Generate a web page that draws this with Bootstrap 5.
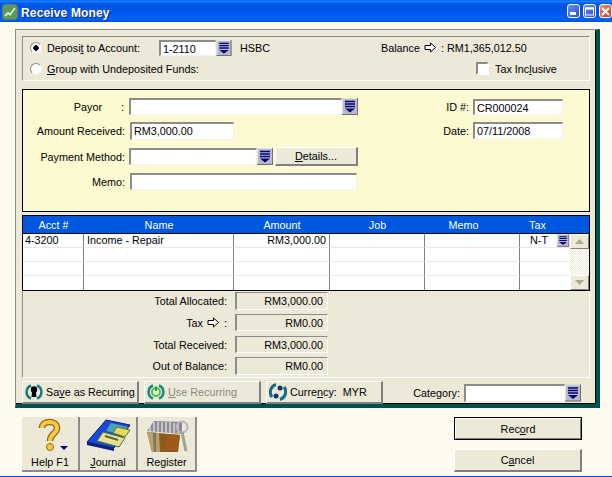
<!DOCTYPE html>
<html lang="en"><head><meta charset="utf-8"><title>Receive Money</title>
<link href="https://cdn.jsdelivr.net/npm/bootstrap@5.3.0/dist/css/bootstrap.min.css" rel="stylesheet">
<style>
html,body{width:612px;height:477px;overflow:hidden}
body{margin:0;background:#fffaf0;color:#000;font:10.8px/14px "Liberation Sans",Arial,sans-serif;border-bottom:1px solid #0054e3;box-sizing:border-box}
u{text-underline-offset:1px}
.xp-title{height:22px;padding-left:2px;background:linear-gradient(#0058ee,#2a86ff 5%,#036ffc 10%,#0057e5 20%,#0054e3 30%,#0055eb 56%,#005bf5 70%,#0262ee 85%,#0054dc 100%);color:#fff;font-weight:700;font-size:12px;letter-spacing:.15px;text-shadow:1px 1px 0 #0a2a80}
.xp-titletext{padding-top:3px}
.xp-appicon{width:16px;height:16px;margin-right:3px;margin-top:2px}
.xp-wbtn{width:13px;height:14px;border:1px solid #fff;border-radius:3px;display:block;margin-left:3px;background:linear-gradient(135deg,#6d8ff0,#2c4fc8)}
.xp-wbtn.close{background:linear-gradient(135deg,#ee9070,#c8391a);margin-left:3px}
.xp-panel{margin:7px 12px 0 15px;width:585px;height:379px;box-sizing:border-box;background:#ece9d8;border-left:1px solid #8c8c8c;border-top:1px solid #8c8c8c;border-right:4px solid #00504c;border-bottom:4px solid #00504c;padding:6px 0 0 6px;box-shadow:inset -1px -1px 0 #000}
.etch{width:568px;border:1px solid;border-color:#8c8c8c #fff #fff #8c8c8c}
.g1{height:45px;padding:0 0 0 7px}
.g1row{height:21px}
.radio{width:12px;height:12px;border-radius:50%;background:#fff;border:1px solid;border-color:#8c8c8c #f4f2e8 #f4f2e8 #8c8c8c;margin-right:5px;flex:none}
.radio.on{background:radial-gradient(circle,#000 0,#000 2.5px,#fff 3px)}
.check{width:13px;height:13px;background:#fff;border:2px solid;border-color:#8c8c8c #fff #fff #8c8c8c;margin-right:6px;flex:none}
.field{background:#fff;border:2px solid;border-color:#8c8c8c #f2f2f2 #f2f2f2 #8c8c8c;border-right-width:1px;border-bottom-width:1px;box-sizing:border-box;padding-left:2px;line-height:14px;white-space:nowrap}
.ddown{width:16px;flex:none;align-self:stretch;display:block}
.form-yel{width:568px;height:123px;margin-top:8px;border:1px solid #000;background:#fcfad0;padding-top:8px}
.lab{width:102px;text-align:right;margin-right:4px;flex:none}
.frow1{height:17px;margin-bottom:7px}
.frow2{height:18px;margin-bottom:7px}
.frow3{height:19px;margin-bottom:7px}
.frow4{height:17px}
.rawbtn{background:#ece9d8;border:1px solid;border-color:#fff #808080 #808080 #fff;border-right-width:2px;border-bottom-width:2px;box-sizing:border-box;text-align:center;color:#000;padding:0;border-radius:0}
.rcol{margin-left:81px}
.gridbox{width:568px;height:76px;margin-top:3px;border:1px solid #000;background:#fff}
.ghead{height:18px;background:#0058e0;color:#fff;border-bottom:1px solid #000;line-height:18px;text-align:center;display:grid;grid-template-columns:61px 150px 96px 95px 95px 69px}
.gt{table-layout:fixed;width:547px;border-collapse:separate;border-spacing:0;height:56px}
.gt td{height:14px;padding:0 2px;line-height:13px;border-right:1px solid #808080;border-bottom:1px solid #e8e8e8;white-space:nowrap;overflow:hidden;vertical-align:top}
.gt tr:last-child td{border-bottom:0}
.gt td:last-child{border-right:0;padding:0}
.sbar{width:19px;height:56px;background:repeating-conic-gradient(#ece9d8 0 25%,#fff 0 50%) 0 0/2px 2px;display:flex;flex-direction:column;justify-content:space-between}
.sbtn{height:15px;background:#ece9d8;border:1px solid;border-color:#fff #808080 #808080 #fff;display:flex;align-items:center;justify-content:center}
.g3{height:87px;border-top:0;padding-top:1px}
.trow{height:18px;margin-bottom:4px}
.trow:nth-child(2){height:17px;margin-bottom:5px}
.trow:nth-child(3){height:17px}
.tlab{width:204px;text-align:right;margin-right:8px}
.tval{width:93px;height:100%;border:1px solid;border-color:#8c8c8c #fff #fff #8c8c8c;border-left-width:2px;text-align:right;padding-right:4px;line-height:16px;box-sizing:border-box}
.brow{margin-top:3px;height:23px;width:568px}
.bbtn{width:117px;height:23px;margin-right:5px;display:flex;align-items:center;padding-left:2px;white-space:nowrap}
.bbtn svg{margin-right:3px;flex:none}
.muted-x{color:#8a8a80}
.foot{margin:9px 30px 0 22px;height:55px}
.tool{width:58px;height:55px;background:#ece9d8;border-right:2px solid #8c8c8c;border-bottom:2px solid #8c8c8c;text-align:center;box-sizing:border-box;padding-top:1px;font-size:10.8px}
.tool:last-child{width:59px}
.tool svg{display:block;margin:0 auto}
.cmd{width:128px;height:23px;line-height:20px}
.cmd.def{outline:1px solid #000;outline-offset:-1px;border-width:2px;border-color:#fff #808080 #808080 #fff;line-height:18px}
</style></head>
<body>
<svg width="0" height="0" class="d-block" style="position:absolute"><defs>
<symbol id="dd" viewBox="0 0 16 17"><rect width="16" height="17" fill="#b9b9c6"/><path d="M0 0H16V1H1V16H0Z" fill="#e6e6ea"/><path d="M16 0V17H0V16H15V0Z" fill="#6f6f78"/><path d="M3 3.500H13M3 6H13M3 8.500H13" stroke="#000080" stroke-width="1.400"/><path d="M3 10.500H13L8 14.500Z" fill="#000080"/></symbol>
<symbol id="arr" viewBox="0 0 13 11"><path d="M1 3.500H6.500V1L11.500 5.500L6.500 10V7.500H1Z" fill="#fff" stroke="#000" stroke-width="1"/></symbol>
</defs></svg>
<div class="xp-title d-flex align-items-center">
<svg class="xp-appicon" viewBox="0 0 16 16"><rect x=".5" y=".5" width="15" height="15" rx="3" fill="#5a9a58" stroke="#7a6a8a"/><path d="M3 12L6 9L8 10.500L13 4" stroke="#d4f0c0" stroke-width="2" fill="none"/></svg>
<span class="xp-titletext">Receive Money</span>
<span class="ms-auto d-flex">
<span class="xp-wbtn d-flex align-items-end justify-content-center"><svg width="7" height="5"><rect y="0" width="6" height="3" fill="#fff"/></svg></span>
<span class="xp-wbtn d-flex align-items-center justify-content-center"><svg width="9" height="9"><rect x=".5" y="1" width="8" height="7" fill="none" stroke="#fff"/><rect x=".5" y=".5" width="8" height="2" fill="#fff"/></svg></span>
<span class="xp-wbtn close d-flex align-items-center justify-content-center"><svg width="9" height="9"><path d="M1 1L8 8M8 1L1 8" stroke="#fff" stroke-width="2"/></svg></span>
</span>
</div>

<div class="xp-panel">
 <div class="etch g1">
  <div class="g1row d-flex align-items-center">
   <span class="radio on"></span><span style="width:112px" class="flex-none">Deposi<u>t</u> to Account:</span>
   <span class="d-flex" style="height:16px;width:73px"><span class="field flex-grow-1">1-2110</span><svg class="ddown"><use href="#dd"/></svg></span>
   <span class="ms-1 ps-1" style="width:145px">HSBC</span>
   <span>Balance</span><svg width="13" height="11" class="mx-1"><use href="#arr"/></svg><span>: RM1,365,012.50</span>
  </div>
  <div class="g1row d-flex align-items-center">
   <span class="radio"></span><span style="width:429px"><u>G</u>roup with Undeposited Funds:</span>
   <span class="check"></span><span>Tax Inc<u>l</u>usive</span>
  </div>
 </div>

 <div class="form-yel d-flex">
  <div>
   <div class="frow1 d-flex align-items-center"><span class="lab d-flex justify-content-end"><span style="margin-right:19px">Payor</span><span style="margin-right:1px">:</span></span><span class="d-flex h-100" style="width:229px"><span class="field flex-grow-1"></span><svg class="ddown"><use href="#dd"/></svg></span></div>
   <div class="frow2 d-flex align-items-center"><span class="lab" style="margin-right:5px">Amount Received:</span><span class="field h-100" style="width:104px">RM3,000.00</span></div>
   <div class="frow3 d-flex align-items-center"><span class="lab">Payment Method:</span><span class="d-flex" style="width:144px;height:17px"><span class="field flex-grow-1"></span><svg class="ddown"><use href="#dd"/></svg></span><button type="button" class="btn rawbtn ms-auto" style="width:83px;height:19px;margin-left:2px!important;font:inherit;line-height:15px"><u>D</u>etails...</button></div>
   <div class="frow4 d-flex align-items-center"><span class="lab" style="margin-right:5px">Memo:</span><span class="field h-100" style="width:227px"></span></div>
  </div>
  <div class="rcol">
   <div class="frow1 d-flex align-items-center" style="margin-top:1px;height:16px"><span class="text-end" style="width:30px;margin-right:4px">ID #:</span><span class="field h-100" style="width:90px">CR000024</span></div>
   <div class="frow2 d-flex align-items-center" style="height:17px"><span class="text-end" style="width:30px;margin-right:4px">Date:</span><span class="field h-100" style="width:90px">07/11/2008</span></div>
  </div>
 </div>

 <div class="gridbox">
  <div class="ghead"><span>Acct #</span><span>Name</span><span>Amount</span><span>Job</span><span style="padding-right:18px">Memo</span><span style="padding-right:34px">Tax</span></div>
  <div class="d-flex">
   <table class="gt">
    <colgroup><col style="width:61px"><col style="width:150px"><col style="width:96px"><col style="width:95px"><col style="width:95px"><col></colgroup>
    <tr><td>4-3200</td><td style="padding-left:3px">Income - Repair</td><td class="text-end" style="padding-right:3px">RM3,000.00</td><td></td><td></td><td><div class="d-flex justify-content-between"><span style="padding-left:10px">N-T</span><svg width="14" height="13"><use href="#dd"/></svg></div></td></tr>
    <tr><td></td><td></td><td></td><td></td><td></td><td></td></tr>
    <tr><td></td><td></td><td></td><td></td><td></td><td></td></tr>
    <tr><td></td><td></td><td></td><td></td><td></td><td></td></tr>
   </table>
   <div class="sbar">
    <div class="sbtn"><svg width="9" height="5"><path d="M0 5H9L4.500 0Z" fill="#aca899"/></svg></div>
    <div class="sbtn"><svg width="9" height="5"><path d="M0 0H9L4.500 5Z" fill="#aca899"/></svg></div>
   </div>
  </div>
 </div>

 <div class="etch g3">
  <div class="trow d-flex"><span class="tlab align-self-center">Total Allocated:</span><span class="tval">RM3,000.00</span></div>
  <div class="trow d-flex"><span class="tlab align-self-center d-flex justify-content-end align-items-center">Tax<svg width="13" height="11" class="mx-1"><use href="#arr"/></svg>:</span><span class="tval">RM0.00</span></div>
  <div class="trow d-flex"><span class="tlab align-self-center">Total Received:</span><span class="tval">RM3,000.00</span></div>
  <div class="trow d-flex"><span class="tlab align-self-center">Out of Balance:</span><span class="tval">RM0.00</span></div>
 </div>

 <div class="brow d-flex align-items-center">
  <button type="button" class="btn rawbtn bbtn" style="font:inherit"><svg width="18" height="18" viewBox="0 0 18 18"><path d="M6 2.500A7 7 0 0 0 6 15.500M12 2.500A7 7 0 0 1 12 15.500" fill="none" stroke="#1a7a80" stroke-width="2.500"/><circle cx="9" cy="6.500" r="3.200"/><path d="M7.200 7H10.800L11.500 14H6.500Z"/></svg>Sa<u>v</u>e as Recurring</button>
  <button type="button" class="btn rawbtn bbtn muted-x" style="font:inherit"><svg width="18" height="18" viewBox="0 0 18 18"><path d="M6 2.500A7 7 0 0 0 6 15.500M12 2.500A7 7 0 0 1 12 15.500" fill="none" stroke="#1a8a80" stroke-width="2.500"/><circle cx="9" cy="9" r="4" fill="none" stroke="#4cc04c" stroke-width="2"/><path d="M9 3.500V8" stroke="#2c9a3c" stroke-width="2"/></svg><u>U</u>se Recurring</button>
  <button type="button" class="btn rawbtn bbtn" style="font:inherit"><svg width="18" height="18" viewBox="0 0 18 18"><path d="M7 1.500A8 8 0 0 0 3 14M11 16.500A8 8 0 0 0 15 4" fill="none" stroke="#1a6a8a" stroke-width="3"/><circle cx="11" cy="5" r="2.500" fill="#123a5a"/><circle cx="7" cy="13" r="2.500" fill="#123a5a"/></svg>Curre<u>n</u>cy:&nbsp; MYR</button>
  <span class="text-end" style="width:76px;margin-right:4px;margin-left:-4px">Category:</span>
  <span class="d-flex" style="width:117px;height:18px"><span class="field flex-grow-1"></span><svg class="ddown"><use href="#dd"/></svg></span>
 </div>
</div>

<div class="foot d-flex justify-content-between">
 <div class="d-flex">
  <div class="tool"><svg width="44" height="37" viewBox="0 0 44 37"><path d="M14 10C14 2 29 2 29 10C29 16 22 15 22 23" fill="none" stroke="#8a6a20" stroke-width="6.500"/><path d="M14 10C14 2 29 2 29 10C29 16 22 15 22 23" fill="none" stroke="#ffc83c" stroke-width="4"/><circle cx="22" cy="29" r="3.500" fill="#ffc83c" stroke="#8a6a20"/><path d="M32 28H40L36 32Z" fill="#000080"/></svg><span>Help F1</span></div>
  <div class="tool"><svg width="48" height="37" viewBox="0 0 48 37"><path d="M22 2L46 7L30 30L3 24Z" fill="#1848d8" stroke="#0a2080"/><path d="M3 24L30 30L30 33L3 27Z" fill="#0a2080"/><path d="M27 5L44 9L39 17L22 13Z" fill="#4aa0b0"/><path d="M33 9L46 12L41 19L29 15Z" fill="#e8d858" stroke="#5a7a30"/><path d="M19 14L41 20L35 29L13 23Z" fill="#e8e090" stroke="#4a6a40"/><path d="M21 18L34 22" stroke="#4a6a40" stroke-width="2"/></svg><span><u>J</u>ournal</span></div>
  <div class="tool"><svg width="46" height="37" viewBox="0 0 46 37"><path d="M3 13L10 3L38 4L38 16Z" fill="#8a8a90"/><path d="M6 8V15M10 4V14M14 4V14M18 4V15M22 4V15M26 4V15M30 5V15M34 5V15" stroke="#d8d8dc" stroke-width="1.500"/><path d="M3 14L36 17L34 34L8 34Z" fill="#8a5a20"/><path d="M3 14L15 15L16 34L8 34Z" fill="#b8a070"/><path d="M9 15L12 15L12 34L10 34Z" fill="#7a7a50"/><path d="M22 16L36 17L34 31L22 33Z" fill="#a05a18"/><circle cx="38" cy="9" r="5.500" fill="none" stroke="#b8b8bc" stroke-width="2"/><path d="M38 14L42 33" stroke="#98a890" stroke-width="3"/></svg><span>Register</span></div>
 </div>
 <div class="d-flex flex-column justify-content-between" style="height:55px">
  <button type="button" class="btn rawbtn cmd def" style="font:inherit">Rec<u>o</u>rd</button>
  <button type="button" class="btn rawbtn cmd" style="font:inherit">C<u>a</u>ncel</button>
 </div>
</div>
</body></html>
